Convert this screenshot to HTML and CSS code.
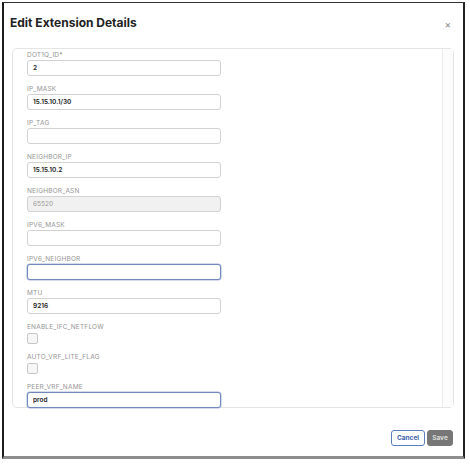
FILE: index.html
```html
<!DOCTYPE html>
<html lang="en">
<head>
    <meta charset="UTF-8">
    <title>Edit Extension Details</title>
    <link rel="stylesheet" href="styles.css">
</head>
<body>
    <div class="window">
        <div class="header">
            <h2>Edit Extension Details</h2>
            <span class="close">&times;</span>
        </div>
        <div class="panel">
            <div class="fields">
                <div class="field">
                    <label>DOT1Q_ID*</label>
                    <input type="text" value="2">
                </div>
                <div class="field">
                    <label>IP_MASK</label>
                    <input type="text" value="15.15.10.1/30">
                </div>
                <div class="field">
                    <label>IP_TAG</label>
                    <input type="text" value="">
                </div>
                <div class="field">
                    <label>NEIGHBOR_IP</label>
                    <input type="text" value="15.15.10.2">
                </div>
                <div class="field">
                    <label>NEIGHBOR_ASN</label>
                    <input type="text" value="65520" disabled>
                </div>
                <div class="field">
                    <label>IPV6_MASK</label>
                    <input type="text" value="">
                </div>
                <div class="field">
                    <label>IPV6_NEIGHBOR</label>
                    <input type="text" class="focus" value="">
                </div>
                <div class="field">
                    <label>MTU</label>
                    <input type="text" value="9216">
                </div>
                <div class="field">
                    <label>ENABLE_IFC_NETFLOW</label>
                    <span class="check"></span>
                </div>
                <div class="field">
                    <label>AUTO_VRF_LITE_FLAG</label>
                    <span class="check"></span>
                </div>
                <div class="field last">
                    <label>PEER_VRF_NAME</label>
                    <input type="text" class="focus" value="prod">
                </div>
            </div>
            <div class="track"></div>
        </div>
        <div class="footer">
            <button class="cancel">Cancel</button>
            <button class="save">Save</button>
        </div>
    </div>
</body>
</html>
```

FILE: styles.css
```css
body {
    margin: 0;
    background: #fff;
    font-family: Inter, "Noto Sans", sans-serif;
}

.window {
    margin: 2px 0 0 2px;
    width: 459px;
    height: 453px;
    border-left: 2px solid #1c1c1c;
    border-top: 1px solid #333;
    border-right: 2px solid #222;
    border-bottom: 3px solid #8e8e8e;
}

.header {
    height: 45px;
    padding: 0 12px 6px 6px;
    box-sizing: border-box;
    display: flex;
    align-items: center;
    justify-content: space-between;
}

    .header h2 {
        margin: 0;
        font-size: 12px;
        font-weight: 700;
        color: #222;
    }

.close {
    font-size: 10px;
    color: #888;
    margin-top: 2px;
}

.panel {
    margin-left: 8px;
    width: 442px;
    height: 360px;
    box-sizing: border-box;
    border: 1px solid #e4e4e4;
    border-radius: 5px;
    display: flex;
}

.fields {
    flex: 1;
    padding: 2px 0 0 14px;
}

.track {
    width: 10px;
    border-left: 1px solid #ececec;
    background: #fcfcfc;
}

.field {
    margin-bottom: 9px;
}

    .field label {
        display: block;
        height: 9px;
        line-height: 9px;
        font-size: 6.5px;
        letter-spacing: 0.2px;
        color: #959595;
    }

    .field input {
        display: block;
        width: 194px;
        height: 16px;
        margin: 0;
        padding: 0 5px;
        box-sizing: border-box;
        border: 1px solid #d2d2d2;
        border-radius: 3px;
        font-family: Inter, "Noto Sans", sans-serif;
        font-size: 6.5px;
        font-weight: 600;
        color: #222;
        background: #fff;
    }

        .field input:disabled {
            background: #f1f1f1;
            color: #999;
            font-weight: 400;
        }

        .field input.focus {
            border: 1px solid #7088bb;
            box-shadow: 0 0 0 0.5px #a9b8d8;
        }

.check {
    display: block;
    width: 9px;
    height: 9px;
    margin-top: 1px;
    border: 1px solid #c6c6c6;
    border-radius: 2px;
    background: #f6f6f6;
}

.footer {
    display: flex;
    justify-content: flex-end;
    gap: 2px;
    padding: 22px 10px 0 0;
}

button {
    height: 16px;
    padding: 0;
    border-radius: 3px;
    font-family: Inter, "Noto Sans", sans-serif;
    font-size: 6.5px;
    font-weight: 700;
}

.cancel {
    width: 34px;
    background: #fff;
    border: 1px solid #5c7fc2;
    color: #3d62ad;
}

.save {
    width: 26px;
    background: #777;
    border: 1px solid #777;
    color: #ddd;
}
```
